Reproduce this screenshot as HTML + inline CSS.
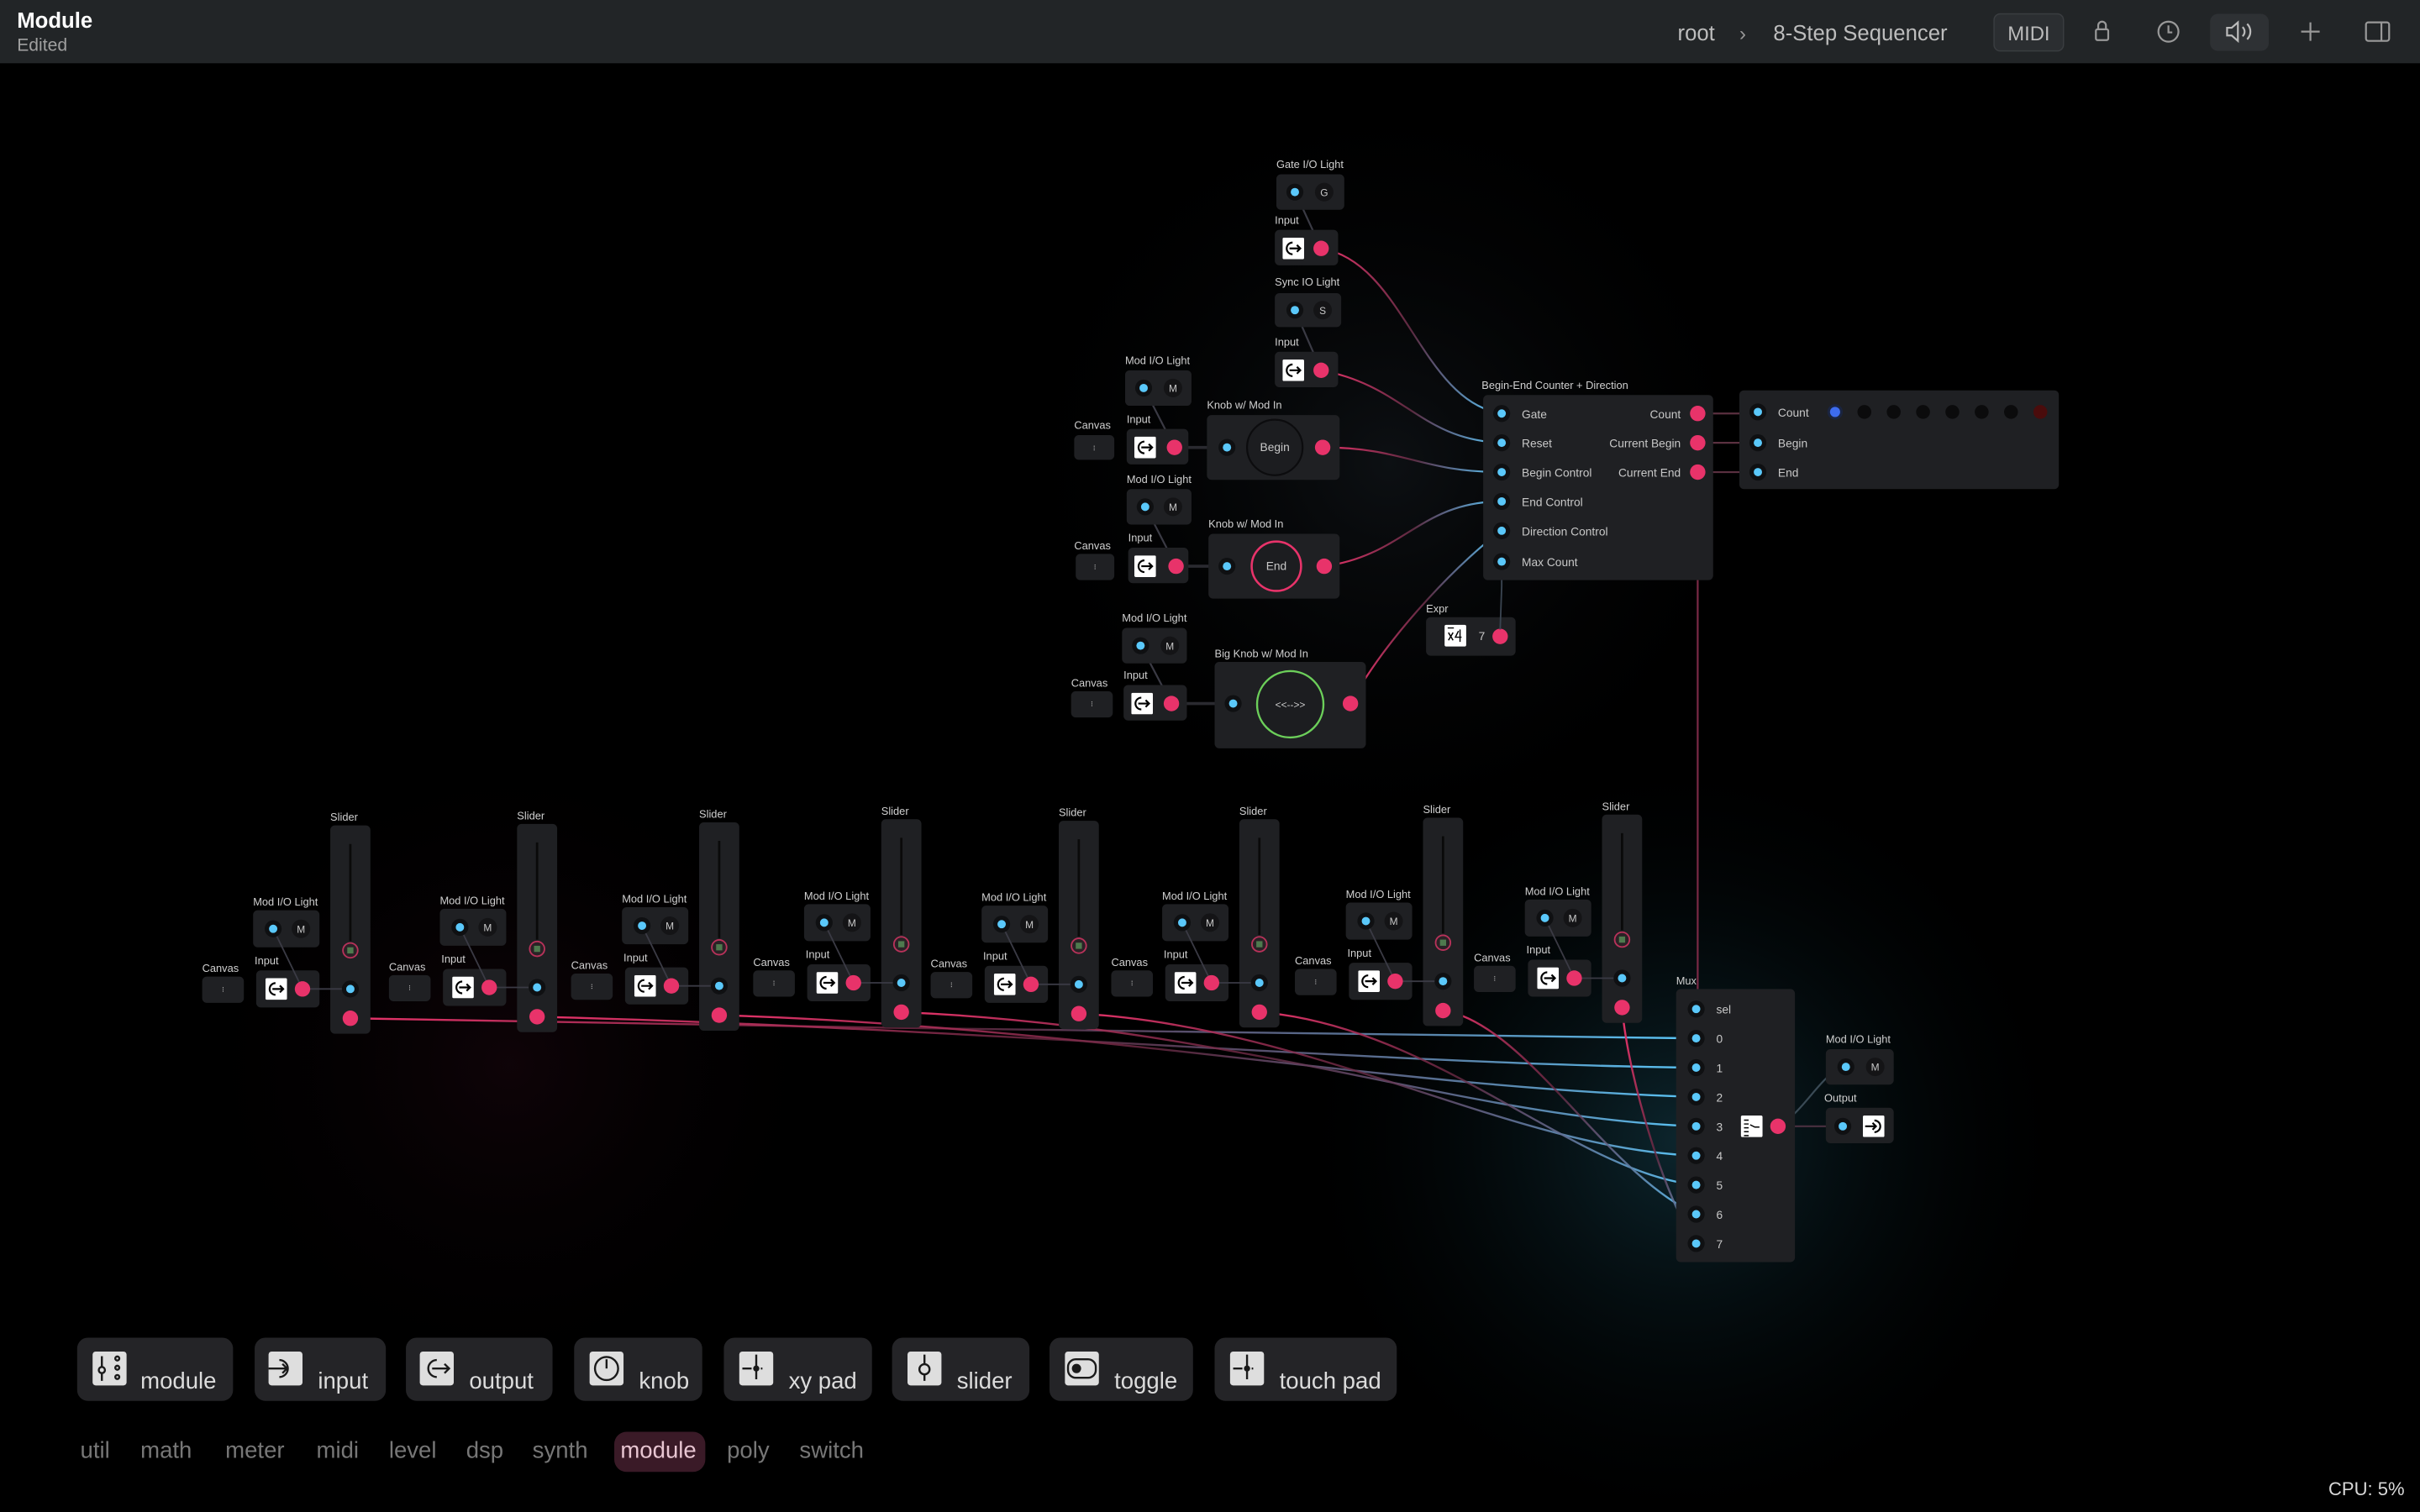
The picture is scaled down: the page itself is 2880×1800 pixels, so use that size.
<!DOCTYPE html>
<html><head><meta charset="utf-8"><style>
html,body{margin:0;padding:0;background:#000;width:2880px;height:1800px;overflow:hidden}
svg{display:block}
text{font-family:"Liberation Sans",sans-serif}
.nb{fill:#1f2023}
.lb{fill:#d0d0d0;font-size:7px}
.tx{fill:#c8c8c8;font-size:7.5px}
.pr{fill:#0f1012}
.pc{fill:#5ac8fa}
.po{fill:#e8336a}
.mc{fill:#141416}
.bt{font-size:15px;fill:#dcdcdc}
.ic{fill:#dedede}
.is{fill:none;stroke:#1a1a1a;stroke-width:1.3}
</style></head><body>
<svg width="2880" height="1800" viewBox="0 0 1568 980" xmlns="http://www.w3.org/2000/svg">
<defs>
<radialGradient id="glow" cx="1090" cy="740" r="260" gradientUnits="userSpaceOnUse">
<stop offset="0" stop-color="#0e2a33" stop-opacity=".9"/><stop offset="1" stop-color="#000" stop-opacity="0"/></radialGradient>
<radialGradient id="glow2" cx="330" cy="690" r="220" gradientUnits="userSpaceOnUse">
<stop offset="0" stop-color="#2a0a16" stop-opacity=".35"/><stop offset="1" stop-color="#000" stop-opacity="0"/></radialGradient>
<radialGradient id="glow3" cx="900" cy="300" r="260" gradientUnits="userSpaceOnUse">
<stop offset="0" stop-color="#101418" stop-opacity=".8"/><stop offset="1" stop-color="#000" stop-opacity="0"/></radialGradient>
<symbol id="oic" viewBox="0 0 14 14"><rect width="14" height="14" rx="1" fill="#fff"/><path d="M6.5 3.2A3.8 3.8 0 1 0 6.5 10.8" fill="none" stroke="#000" stroke-width="1.2"/><path d="M4.5 7H11.5M9.3 4.8L11.5 7L9.3 9.2" fill="none" stroke="#000" stroke-width="1.2"/></symbol>
<symbol id="iic" viewBox="0 0 14 14"><rect width="14" height="14" rx="1" fill="#fff"/><path d="M7.5 3.2A3.8 3.8 0 1 1 7.5 10.8" fill="none" stroke="#000" stroke-width="1.2"/><path d="M1.5 7H8.5M6.3 4.8L8.5 7L6.3 9.2" fill="none" stroke="#000" stroke-width="1.2"/></symbol>
<linearGradient id="rc" x1="0" y1="0" x2="1" y2="0"><stop offset="0" stop-color="#e8336a"/><stop offset=".5" stop-color="#5a2a40"/><stop offset="1" stop-color="#5ac8fa"/></linearGradient>
<linearGradient id="rc2" x1="0" y1="0" x2="1" y2="0"><stop offset="0" stop-color="#e8336a"/><stop offset=".45" stop-color="#6a2a44" stop-opacity=".8"/><stop offset="1" stop-color="#5ac8fa"/></linearGradient>
</defs>
<rect width="1568" height="980" fill="#000"/>
<rect width="1568" height="980" fill="url(#glow)"/>
<rect width="1568" height="980" fill="url(#glow2)"/>
<rect width="1568" height="980" fill="url(#glow3)"/>

<!-- top bar -->
<rect width="1568" height="41" fill="#222527"/>
<text x="11" y="18" style="font-size:14px;font-weight:bold;fill:#fff">Module</text>
<text x="11" y="33" style="font-size:11.5px;fill:#a0a0a0">Edited</text>
<text x="1087" y="26" style="font-size:14px;fill:#bdbdbd">root</text>
<text x="1127" y="26" style="font-size:13px;fill:#999">›</text>
<text x="1149" y="26" style="font-size:14px;fill:#bdbdbd">8-Step Sequencer</text>
<rect x="1292" y="9" width="45" height="24" rx="4" fill="#2b2e31" stroke="#3a3d40" stroke-width=".8"/>
<text x="1314.5" y="26" text-anchor="middle" style="font-size:13px;fill:#bbb">MIDI</text>
<g fill="none" stroke="#999" stroke-width="1.2">
<rect x="1358" y="19" width="8" height="7" rx="1"/><path d="M1359.5 19V16.5a2.5 2.5 0 0 1 5 0V19"/>
<circle cx="1405" cy="20.5" r="6.5"/><path d="M1405 16.5v4.5h2.5"/>
</g>
<rect x="1432" y="9" width="38" height="24" rx="5" fill="#2e3134"/>
<g fill="none" stroke="#bbb" stroke-width="1.2"><path d="M1443 18h3l4-3.5v12l-4-3.5h-3z"/><path d="M1453 17.5a4 4 0 0 1 0 6M1456 15.5a7 7 0 0 1 0 10"/>
<path d="M1497 14.5v12M1491 20.5h12" stroke="#999"/>
<rect x="1533" y="14.5" width="15" height="12" rx="1.5" stroke="#999"/><path d="M1543 14.5v12" stroke="#999"/></g>

<!-- wires top -->
<g fill="none" stroke-width="1.2">
<path d="M856 161C910 170 920 260 973 268" stroke="url(#rc)"/>
<path d="M856 240C910 250 920 285 973 287" stroke="url(#rc)"/>
<path d="M857 290C910 290 920 306 973 306" stroke="url(#rc)"/>
<path d="M858 367C910 360 920 325 973 325" stroke="url(#rc)"/>
<path d="M875 456C900 410 950 360 973 344" stroke="url(#rc)"/>
<path d="M1100 268H1139M1100 287H1139M1100 306H1139" stroke="#5a3040"/>
<path d="M1100 306V654H1099" stroke="#7a2a46"/>
<path d="M1152 730H1194" stroke="#4a3040"/>
<path d="M1152 730C1170 720 1180 695 1196 691" stroke="#3a4a55"/>
<path d="M839 124L856 161M839 201L856 240M741 251L761 290M742 328L762 367M739 418L759 456" stroke="#3a3a44"/>
<path d="M761 290H795M762 367H795M759 456H799" stroke="#2a2a30" stroke-width="2"/>
</g>

<!-- top column nodes -->
<text class="lb" x="827" y="109">Gate I/O Light</text>
<rect class="nb" x="827" y="113" width="44" height="23" rx="3"/>
<circle class="pr" cx="839" cy="124.5" r="5.5"/><circle class="pc" cx="839" cy="124.5" r="2.7"/>
<circle class="mc" cx="858" cy="124.5" r="6"/><text class="tx" x="858" y="127" text-anchor="middle" style="font-size:6.5px">G</text>
<text class="lb" x="826" y="145">Input</text>
<rect class="nb" x="826" y="149" width="41" height="23" rx="3"/>
<use href="#oic" x="831" y="154" width="14" height="14"/><circle class="po" cx="856" cy="161" r="5"/>
<text class="lb" x="826" y="185">Sync IO Light</text>
<rect class="nb" x="826" y="190" width="43" height="22" rx="3"/>
<circle class="pr" cx="839" cy="201" r="5.5"/><circle class="pc" cx="839" cy="201" r="2.7"/>
<circle class="mc" cx="857" cy="201" r="6"/><text class="tx" x="857" y="203.5" text-anchor="middle" style="font-size:6.5px">S</text>
<text class="lb" x="826" y="224">Input</text>
<rect class="nb" x="826" y="228" width="41" height="23" rx="3"/>
<use href="#oic" x="831" y="233" width="14" height="14"/><circle class="po" cx="856" cy="240" r="5"/>

<text class="lb" x="729" y="236">Mod I/O Light</text>
<rect class="nb" x="729" y="240" width="43" height="23" rx="3"/>
<circle class="pr" cx="741" cy="251.5" r="5.5"/><circle class="pc" cx="741" cy="251.5" r="2.7"/>
<circle class="mc" cx="760" cy="251.5" r="6"/><text class="tx" x="760" y="254" text-anchor="middle" style="font-size:6.5px">M</text>
<text class="lb" x="696" y="278">Canvas</text>
<rect class="nb" x="696" y="282" width="26" height="16" rx="3"/><text class="tx" x="709" y="292" text-anchor="middle" style="font-size:5px">⁝</text>
<text class="lb" x="730" y="274">Input</text>
<rect class="nb" x="730" y="278" width="40" height="23" rx="3"/>
<use href="#oic" x="735" y="283" width="14" height="14"/><circle class="po" cx="761" cy="290" r="5"/>
<text class="lb" x="782" y="265">Knob w/ Mod In</text>
<rect class="nb" x="782" y="269" width="86" height="42" rx="3"/>
<circle class="pr" cx="795" cy="290" r="5.5"/><circle class="pc" cx="795" cy="290" r="2.7"/>
<circle cx="826" cy="290" r="18" fill="#1c1d20" stroke="#0c0c0e" stroke-width="1.2"/>
<text class="tx" x="826" y="292.5" text-anchor="middle">Begin</text>
<circle class="po" cx="857" cy="290" r="5"/>

<text class="lb" x="730" y="313">Mod I/O Light</text>
<rect class="nb" x="730" y="317" width="42" height="23" rx="3"/>
<circle class="pr" cx="742" cy="328.5" r="5.5"/><circle class="pc" cx="742" cy="328.5" r="2.7"/>
<circle class="mc" cx="760" cy="328.5" r="6"/><text class="tx" x="760" y="331" text-anchor="middle" style="font-size:6.5px">M</text>
<text class="lb" x="696" y="356">Canvas</text>
<rect class="nb" x="697" y="359" width="25" height="17" rx="3"/><text class="tx" x="709.5" y="369" text-anchor="middle" style="font-size:5px">⁝</text>
<text class="lb" x="731" y="351">Input</text>
<rect class="nb" x="731" y="355" width="39" height="23" rx="3"/>
<use href="#oic" x="735" y="360" width="14" height="14"/><circle class="po" cx="762" cy="367" r="5"/>
<text class="lb" x="783" y="342">Knob w/ Mod In</text>
<rect class="nb" x="783" y="346" width="85" height="42" rx="3"/>
<circle class="pr" cx="795" cy="367" r="5.5"/><circle class="pc" cx="795" cy="367" r="2.7"/>
<circle cx="827" cy="367" r="16" fill="#1c1d20" stroke="#e8336a" stroke-width="1.4"/>
<text class="tx" x="827" y="369.5" text-anchor="middle">End</text>
<circle class="po" cx="858" cy="367" r="5"/>

<text class="lb" x="727" y="403">Mod I/O Light</text>
<rect class="nb" x="727" y="407" width="42" height="23" rx="3"/>
<circle class="pr" cx="739" cy="418.5" r="5.5"/><circle class="pc" cx="739" cy="418.5" r="2.7"/>
<circle class="mc" cx="758" cy="418.5" r="6"/><text class="tx" x="758" y="421" text-anchor="middle" style="font-size:6.5px">M</text>
<text class="lb" x="694" y="445">Canvas</text>
<rect class="nb" x="694" y="448" width="27" height="17" rx="3"/><text class="tx" x="707.5" y="458" text-anchor="middle" style="font-size:5px">⁝</text>
<text class="lb" x="728" y="440">Input</text>
<rect class="nb" x="728" y="444" width="41" height="23" rx="3"/>
<use href="#oic" x="733" y="449" width="14" height="14"/><circle class="po" cx="759" cy="456" r="5"/>
<text class="lb" x="787" y="426">Big Knob w/ Mod In</text>
<rect class="nb" x="787" y="429" width="98" height="56" rx="3"/>
<circle class="pr" cx="799" cy="456" r="5.5"/><circle class="pc" cx="799" cy="456" r="2.7"/>
<circle cx="836" cy="456.5" r="21.5" fill="#1c1d20" stroke="#6ccf5a" stroke-width="1.3"/>
<text class="tx" x="836" y="459" text-anchor="middle" style="font-size:6.5px">&lt;&lt;--&gt;&gt;</text>
<circle class="po" cx="875" cy="456" r="5"/>

<text class="lb" x="924" y="397">Expr</text>
<rect class="nb" x="924" y="400" width="58" height="25" rx="3"/>
<rect x="936" y="405" width="14" height="14" rx="1" fill="#fff"/><path d="M938 407h4M938.5 410l3 5M941.5 410l-3 5M945 409l-2 4h4M946 408v8" stroke="#000" stroke-width=".8" fill="none"/>
<text class="tx" x="958" y="415">7</text>
<circle class="po" cx="972" cy="412.5" r="5"/>
<path d="M973 364V380L972 408" stroke="#3a4450" fill="none" stroke-width="1"/>

<text class="lb" x="960" y="252">Begin-End Counter + Direction</text>
<rect class="nb" x="961" y="256" width="149" height="120" rx="3"/>
<g>
<circle class="pr" cx="973" cy="268" r="5.5"/><circle class="pc" cx="973" cy="268" r="2.7"/><text class="tx" x="986" y="271">Gate</text>
<circle class="pr" cx="973" cy="287" r="5.5"/><circle class="pc" cx="973" cy="287" r="2.7"/><text class="tx" x="986" y="290">Reset</text>
<circle class="pr" cx="973" cy="306" r="5.5"/><circle class="pc" cx="973" cy="306" r="2.7"/><text class="tx" x="986" y="309">Begin Control</text>
<circle class="pr" cx="973" cy="325" r="5.5"/><circle class="pc" cx="973" cy="325" r="2.7"/><text class="tx" x="986" y="328">End Control</text>
<circle class="pr" cx="973" cy="344" r="5.5"/><circle class="pc" cx="973" cy="344" r="2.7"/><text class="tx" x="986" y="347">Direction Control</text>
<circle class="pr" cx="973" cy="364" r="5.5"/><circle class="pc" cx="973" cy="364" r="2.7"/><text class="tx" x="986" y="367">Max Count</text>
<text class="tx" x="1089" y="271" text-anchor="end">Count</text><circle class="po" cx="1100" cy="268" r="5"/>
<text class="tx" x="1089" y="290" text-anchor="end">Current Begin</text><circle class="po" cx="1100" cy="287" r="5"/>
<text class="tx" x="1089" y="309" text-anchor="end">Current End</text><circle class="po" cx="1100" cy="306" r="5"/>
</g>
<rect class="nb" x="1127" y="253" width="207" height="64" rx="3"/>
<circle class="pr" cx="1139" cy="267" r="5.5"/><circle class="pc" cx="1139" cy="267" r="2.7"/><text class="tx" x="1152" y="270">Count</text>
<circle class="pr" cx="1139" cy="287" r="5.5"/><circle class="pc" cx="1139" cy="287" r="2.7"/><text class="tx" x="1152" y="290">Begin</text>
<circle class="pr" cx="1139" cy="306" r="5.5"/><circle class="pc" cx="1139" cy="306" r="2.7"/><text class="tx" x="1152" y="309">End</text>
<circle cx="1189" cy="267" r="5" fill="#1a2440"/><circle cx="1189" cy="267" r="3.3" fill="#3d6cf0"/>
<g fill="#0b0b0c"><circle cx="1208" cy="267" r="4.5"/><circle cx="1227" cy="267" r="4.5"/><circle cx="1246" cy="267" r="4.5"/><circle cx="1265" cy="267" r="4.5"/><circle cx="1284" cy="267" r="4.5"/><circle cx="1303" cy="267" r="4.5"/></g>
<circle cx="1322" cy="267" r="4.5" fill="#4a0c0c"/>

<!-- bottom wires -->
<g fill="none" stroke-width="1.3">
<path d="M227 660C500 665 900 672 1099 673" stroke="url(#rc2)"/>
<path d="M348 659C600 665 900 690 1099 692" stroke="url(#rc2)"/>
<path d="M466 658C700 665 900 705 1099 711" stroke="url(#rc2)"/>
<path d="M584 656C800 665 950 725 1099 730" stroke="url(#rc2)"/>
<path d="M699 657C850 665 980 745 1099 749" stroke="url(#rc2)"/>
<path d="M816 656C930 665 1020 760 1099 768" stroke="url(#rc2)"/>
<path d="M936 655C990 665 1040 760 1099 787" stroke="url(#rc2)"/>
<path d="M1051 653C1055 700 1080 780 1099 806" stroke="url(#rc2)"/>
</g>

<!-- slider groups -->
<g>
<text class="lb" x="131" y="630">Canvas</text>
<rect class="nb" x="131" y="633" width="27" height="17" rx="3"/><text class="tx" x="144.5" y="643" text-anchor="middle" style="font-size:5px">⁝</text>
<text class="lb" x="164" y="587">Mod I/O Light</text>
<rect class="nb" x="164" y="590" width="43" height="24" rx="3"/>
<text class="lb" x="165" y="625">Input</text>
<rect class="nb" x="166" y="629" width="41" height="24" rx="3"/>
<text class="lb" x="214" y="532">Slider</text>
<rect class="nb" x="214" y="535" width="26" height="135" rx="3"/>
<path d="M177 602L196 641M196 641H227" stroke="#3a3a44" fill="none" stroke-width="1"/>
<circle class="pr" cx="177" cy="602" r="5.5"/><circle class="pc" cx="177" cy="602" r="2.7"/>
<circle class="mc" cx="195" cy="602" r="6"/><text class="tx" x="195" y="604.5" text-anchor="middle" style="font-size:6.5px">M</text>
<use href="#oic" x="172" y="634" width="14" height="14"/>
<circle class="po" cx="196" cy="641" r="5"/>
<path d="M227 547V610" stroke="#0a0a0a" stroke-width="1.5"/>
<circle cx="227" cy="616" r="4.8" fill="#2a2226" stroke="#b8325a" stroke-width="1"/><rect x="225" y="614" width="4" height="4" fill="#4e7a4e"/>
<circle class="pr" cx="227" cy="641" r="5.5"/><circle class="pc" cx="227" cy="641" r="2.7"/>
<circle class="po" cx="227" cy="660" r="5"/>
</g>
<g transform="translate(121,-1)">
<text class="lb" x="131" y="630">Canvas</text>
<rect class="nb" x="131" y="633" width="27" height="17" rx="3"/><text class="tx" x="144.5" y="643" text-anchor="middle" style="font-size:5px">⁝</text>
<text class="lb" x="164" y="587">Mod I/O Light</text>
<rect class="nb" x="164" y="590" width="43" height="24" rx="3"/>
<text class="lb" x="165" y="625">Input</text>
<rect class="nb" x="166" y="629" width="41" height="24" rx="3"/>
<text class="lb" x="214" y="532">Slider</text>
<rect class="nb" x="214" y="535" width="26" height="135" rx="3"/>
<path d="M177 602L196 641M196 641H227" stroke="#3a3a44" fill="none" stroke-width="1"/>
<circle class="pr" cx="177" cy="602" r="5.5"/><circle class="pc" cx="177" cy="602" r="2.7"/>
<circle class="mc" cx="195" cy="602" r="6"/><text class="tx" x="195" y="604.5" text-anchor="middle" style="font-size:6.5px">M</text>
<use href="#oic" x="172" y="634" width="14" height="14"/>
<circle class="po" cx="196" cy="641" r="5"/>
<path d="M227 547V610" stroke="#0a0a0a" stroke-width="1.5"/>
<circle cx="227" cy="616" r="4.8" fill="#2a2226" stroke="#b8325a" stroke-width="1"/><rect x="225" y="614" width="4" height="4" fill="#4e7a4e"/>
<circle class="pr" cx="227" cy="641" r="5.5"/><circle class="pc" cx="227" cy="641" r="2.7"/>
<circle class="po" cx="227" cy="660" r="5"/>
</g>
<g transform="translate(239,-2)">
<text class="lb" x="131" y="630">Canvas</text>
<rect class="nb" x="131" y="633" width="27" height="17" rx="3"/><text class="tx" x="144.5" y="643" text-anchor="middle" style="font-size:5px">⁝</text>
<text class="lb" x="164" y="587">Mod I/O Light</text>
<rect class="nb" x="164" y="590" width="43" height="24" rx="3"/>
<text class="lb" x="165" y="625">Input</text>
<rect class="nb" x="166" y="629" width="41" height="24" rx="3"/>
<text class="lb" x="214" y="532">Slider</text>
<rect class="nb" x="214" y="535" width="26" height="135" rx="3"/>
<path d="M177 602L196 641M196 641H227" stroke="#3a3a44" fill="none" stroke-width="1"/>
<circle class="pr" cx="177" cy="602" r="5.5"/><circle class="pc" cx="177" cy="602" r="2.7"/>
<circle class="mc" cx="195" cy="602" r="6"/><text class="tx" x="195" y="604.5" text-anchor="middle" style="font-size:6.5px">M</text>
<use href="#oic" x="172" y="634" width="14" height="14"/>
<circle class="po" cx="196" cy="641" r="5"/>
<path d="M227 547V610" stroke="#0a0a0a" stroke-width="1.5"/>
<circle cx="227" cy="616" r="4.8" fill="#2a2226" stroke="#b8325a" stroke-width="1"/><rect x="225" y="614" width="4" height="4" fill="#4e7a4e"/>
<circle class="pr" cx="227" cy="641" r="5.5"/><circle class="pc" cx="227" cy="641" r="2.7"/>
<circle class="po" cx="227" cy="660" r="5"/>
</g>
<g transform="translate(357,-4)">
<text class="lb" x="131" y="630">Canvas</text>
<rect class="nb" x="131" y="633" width="27" height="17" rx="3"/><text class="tx" x="144.5" y="643" text-anchor="middle" style="font-size:5px">⁝</text>
<text class="lb" x="164" y="587">Mod I/O Light</text>
<rect class="nb" x="164" y="590" width="43" height="24" rx="3"/>
<text class="lb" x="165" y="625">Input</text>
<rect class="nb" x="166" y="629" width="41" height="24" rx="3"/>
<text class="lb" x="214" y="532">Slider</text>
<rect class="nb" x="214" y="535" width="26" height="135" rx="3"/>
<path d="M177 602L196 641M196 641H227" stroke="#3a3a44" fill="none" stroke-width="1"/>
<circle class="pr" cx="177" cy="602" r="5.5"/><circle class="pc" cx="177" cy="602" r="2.7"/>
<circle class="mc" cx="195" cy="602" r="6"/><text class="tx" x="195" y="604.5" text-anchor="middle" style="font-size:6.5px">M</text>
<use href="#oic" x="172" y="634" width="14" height="14"/>
<circle class="po" cx="196" cy="641" r="5"/>
<path d="M227 547V610" stroke="#0a0a0a" stroke-width="1.5"/>
<circle cx="227" cy="616" r="4.8" fill="#2a2226" stroke="#b8325a" stroke-width="1"/><rect x="225" y="614" width="4" height="4" fill="#4e7a4e"/>
<circle class="pr" cx="227" cy="641" r="5.5"/><circle class="pc" cx="227" cy="641" r="2.7"/>
<circle class="po" cx="227" cy="660" r="5"/>
</g>
<g transform="translate(472,-3)">
<text class="lb" x="131" y="630">Canvas</text>
<rect class="nb" x="131" y="633" width="27" height="17" rx="3"/><text class="tx" x="144.5" y="643" text-anchor="middle" style="font-size:5px">⁝</text>
<text class="lb" x="164" y="587">Mod I/O Light</text>
<rect class="nb" x="164" y="590" width="43" height="24" rx="3"/>
<text class="lb" x="165" y="625">Input</text>
<rect class="nb" x="166" y="629" width="41" height="24" rx="3"/>
<text class="lb" x="214" y="532">Slider</text>
<rect class="nb" x="214" y="535" width="26" height="135" rx="3"/>
<path d="M177 602L196 641M196 641H227" stroke="#3a3a44" fill="none" stroke-width="1"/>
<circle class="pr" cx="177" cy="602" r="5.5"/><circle class="pc" cx="177" cy="602" r="2.7"/>
<circle class="mc" cx="195" cy="602" r="6"/><text class="tx" x="195" y="604.5" text-anchor="middle" style="font-size:6.5px">M</text>
<use href="#oic" x="172" y="634" width="14" height="14"/>
<circle class="po" cx="196" cy="641" r="5"/>
<path d="M227 547V610" stroke="#0a0a0a" stroke-width="1.5"/>
<circle cx="227" cy="616" r="4.8" fill="#2a2226" stroke="#b8325a" stroke-width="1"/><rect x="225" y="614" width="4" height="4" fill="#4e7a4e"/>
<circle class="pr" cx="227" cy="641" r="5.5"/><circle class="pc" cx="227" cy="641" r="2.7"/>
<circle class="po" cx="227" cy="660" r="5"/>
</g>
<g transform="translate(589,-4)">
<text class="lb" x="131" y="630">Canvas</text>
<rect class="nb" x="131" y="633" width="27" height="17" rx="3"/><text class="tx" x="144.5" y="643" text-anchor="middle" style="font-size:5px">⁝</text>
<text class="lb" x="164" y="587">Mod I/O Light</text>
<rect class="nb" x="164" y="590" width="43" height="24" rx="3"/>
<text class="lb" x="165" y="625">Input</text>
<rect class="nb" x="166" y="629" width="41" height="24" rx="3"/>
<text class="lb" x="214" y="532">Slider</text>
<rect class="nb" x="214" y="535" width="26" height="135" rx="3"/>
<path d="M177 602L196 641M196 641H227" stroke="#3a3a44" fill="none" stroke-width="1"/>
<circle class="pr" cx="177" cy="602" r="5.5"/><circle class="pc" cx="177" cy="602" r="2.7"/>
<circle class="mc" cx="195" cy="602" r="6"/><text class="tx" x="195" y="604.5" text-anchor="middle" style="font-size:6.5px">M</text>
<use href="#oic" x="172" y="634" width="14" height="14"/>
<circle class="po" cx="196" cy="641" r="5"/>
<path d="M227 547V610" stroke="#0a0a0a" stroke-width="1.5"/>
<circle cx="227" cy="616" r="4.8" fill="#2a2226" stroke="#b8325a" stroke-width="1"/><rect x="225" y="614" width="4" height="4" fill="#4e7a4e"/>
<circle class="pr" cx="227" cy="641" r="5.5"/><circle class="pc" cx="227" cy="641" r="2.7"/>
<circle class="po" cx="227" cy="660" r="5"/>
</g>
<g transform="translate(708,-5)">
<text class="lb" x="131" y="630">Canvas</text>
<rect class="nb" x="131" y="633" width="27" height="17" rx="3"/><text class="tx" x="144.5" y="643" text-anchor="middle" style="font-size:5px">⁝</text>
<text class="lb" x="164" y="587">Mod I/O Light</text>
<rect class="nb" x="164" y="590" width="43" height="24" rx="3"/>
<text class="lb" x="165" y="625">Input</text>
<rect class="nb" x="166" y="629" width="41" height="24" rx="3"/>
<text class="lb" x="214" y="532">Slider</text>
<rect class="nb" x="214" y="535" width="26" height="135" rx="3"/>
<path d="M177 602L196 641M196 641H227" stroke="#3a3a44" fill="none" stroke-width="1"/>
<circle class="pr" cx="177" cy="602" r="5.5"/><circle class="pc" cx="177" cy="602" r="2.7"/>
<circle class="mc" cx="195" cy="602" r="6"/><text class="tx" x="195" y="604.5" text-anchor="middle" style="font-size:6.5px">M</text>
<use href="#oic" x="172" y="634" width="14" height="14"/>
<circle class="po" cx="196" cy="641" r="5"/>
<path d="M227 547V610" stroke="#0a0a0a" stroke-width="1.5"/>
<circle cx="227" cy="616" r="4.8" fill="#2a2226" stroke="#b8325a" stroke-width="1"/><rect x="225" y="614" width="4" height="4" fill="#4e7a4e"/>
<circle class="pr" cx="227" cy="641" r="5.5"/><circle class="pc" cx="227" cy="641" r="2.7"/>
<circle class="po" cx="227" cy="660" r="5"/>
</g>
<g transform="translate(824,-7)">
<text class="lb" x="131" y="630">Canvas</text>
<rect class="nb" x="131" y="633" width="27" height="17" rx="3"/><text class="tx" x="144.5" y="643" text-anchor="middle" style="font-size:5px">⁝</text>
<text class="lb" x="164" y="587">Mod I/O Light</text>
<rect class="nb" x="164" y="590" width="43" height="24" rx="3"/>
<text class="lb" x="165" y="625">Input</text>
<rect class="nb" x="166" y="629" width="41" height="24" rx="3"/>
<text class="lb" x="214" y="532">Slider</text>
<rect class="nb" x="214" y="535" width="26" height="135" rx="3"/>
<path d="M177 602L196 641M196 641H227" stroke="#3a3a44" fill="none" stroke-width="1"/>
<circle class="pr" cx="177" cy="602" r="5.5"/><circle class="pc" cx="177" cy="602" r="2.7"/>
<circle class="mc" cx="195" cy="602" r="6"/><text class="tx" x="195" y="604.5" text-anchor="middle" style="font-size:6.5px">M</text>
<use href="#oic" x="172" y="634" width="14" height="14"/>
<circle class="po" cx="196" cy="641" r="5"/>
<path d="M227 547V610" stroke="#0a0a0a" stroke-width="1.5"/>
<circle cx="227" cy="616" r="4.8" fill="#2a2226" stroke="#b8325a" stroke-width="1"/><rect x="225" y="614" width="4" height="4" fill="#4e7a4e"/>
<circle class="pr" cx="227" cy="641" r="5.5"/><circle class="pc" cx="227" cy="641" r="2.7"/>
<circle class="po" cx="227" cy="660" r="5"/>
</g>

<!-- mux -->
<text class="lb" x="1086" y="638">Mux</text>
<rect class="nb" x="1086" y="641" width="77" height="177" rx="3"/>
<g>
<circle class="pr" cx="1099" cy="654" r="5.5"/><circle class="pc" cx="1099" cy="654" r="2.7"/><text class="tx" x="1112" y="657">sel</text>
<circle class="pr" cx="1099" cy="673" r="5.5"/><circle class="pc" cx="1099" cy="673" r="2.7"/><text class="tx" x="1112" y="676">0</text>
<circle class="pr" cx="1099" cy="692" r="5.5"/><circle class="pc" cx="1099" cy="692" r="2.7"/><text class="tx" x="1112" y="695">1</text>
<circle class="pr" cx="1099" cy="711" r="5.5"/><circle class="pc" cx="1099" cy="711" r="2.7"/><text class="tx" x="1112" y="714">2</text>
<circle class="pr" cx="1099" cy="730" r="5.5"/><circle class="pc" cx="1099" cy="730" r="2.7"/><text class="tx" x="1112" y="733">3</text>
<circle class="pr" cx="1099" cy="749" r="5.5"/><circle class="pc" cx="1099" cy="749" r="2.7"/><text class="tx" x="1112" y="752">4</text>
<circle class="pr" cx="1099" cy="768" r="5.5"/><circle class="pc" cx="1099" cy="768" r="2.7"/><text class="tx" x="1112" y="771">5</text>
<circle class="pr" cx="1099" cy="787" r="5.5"/><circle class="pc" cx="1099" cy="787" r="2.7"/><text class="tx" x="1112" y="790">6</text>
<circle class="pr" cx="1099" cy="806" r="5.5"/><circle class="pc" cx="1099" cy="806" r="2.7"/><text class="tx" x="1112" y="809">7</text>
</g>
<rect x="1128" y="723" width="14" height="14" rx="1" fill="#fff"/>
<path d="M1130 726h3M1130 728.5h3M1130 731h3M1130 733.5h3M1130 736h3M1134 729l3 1.5h3" stroke="#000" stroke-width=".8" fill="none"/>
<circle class="po" cx="1152" cy="730" r="5"/>
<text class="lb" x="1183" y="676">Mod I/O Light</text>
<rect class="nb" x="1183" y="680" width="44" height="23" rx="3"/>
<circle class="pr" cx="1196" cy="691.5" r="5.5"/><circle class="pc" cx="1196" cy="691.5" r="2.7"/>
<circle class="mc" cx="1215" cy="691.5" r="6"/><text class="tx" x="1215" y="694" text-anchor="middle" style="font-size:6.5px">M</text>
<text class="lb" x="1182" y="714">Output</text>
<rect class="nb" x="1183" y="718" width="44" height="23" rx="3"/>
<circle class="pr" cx="1194" cy="730" r="5.5"/><circle class="pc" cx="1194" cy="730" r="2.7"/>
<use href="#iic" x="1207" y="723" width="14" height="14"/>

<!-- toolbar -->
<g>
<rect x="50" y="867" width="101" height="41" rx="7" fill="#242427"/>
<rect class="ic" x="60" y="876" width="22" height="22" rx="2"/>
<path class="is" d="M66 879v7M66 890v5"/><circle class="is" cx="66" cy="888" r="2"/><circle class="is" cx="76" cy="880.5" r="1.3"/><circle class="is" cx="76" cy="886.5" r="1.3"/><circle class="is" cx="76" cy="892.5" r="1.3"/>
<text class="bt" x="91" y="900">module</text>

<rect x="165" y="867" width="85" height="41" rx="7" fill="#242427"/>
<rect class="ic" x="174" y="876" width="22" height="22" rx="2"/>
<path class="is" d="M181 881.5A5.5 5.5 0 1 1 181 892.5M174 887H186M183 884L186 887L183 890"/>
<text class="bt" x="206" y="900">input</text>

<rect x="263" y="867" width="95" height="41" rx="7" fill="#242427"/>
<rect class="ic" x="272" y="876" width="22" height="22" rx="2"/>
<path class="is" d="M283 881.5A5.5 5.5 0 1 0 283 892.5M280 887H291M288 884L291 887L288 890"/>
<text class="bt" x="304" y="900">output</text>

<rect x="372" y="867" width="83" height="41" rx="7" fill="#242427"/>
<rect class="ic" x="382" y="876" width="22" height="22" rx="2"/>
<circle class="is" cx="393" cy="887" r="7.5"/><path class="is" d="M393 881v6"/>
<text class="bt" x="414" y="900">knob</text>

<rect x="469" y="867" width="96" height="41" rx="7" fill="#242427"/>
<rect class="ic" x="479" y="876" width="22" height="22" rx="2"/>
<path class="is" d="M490 878v16M481 887h6M493 887h1"/><circle cx="490" cy="887" r="2" fill="#1a1a1a"/>
<text class="bt" x="511" y="900">xy pad</text>

<rect x="578" y="867" width="89" height="41" rx="7" fill="#242427"/>
<rect class="ic" x="588" y="876" width="22" height="22" rx="2"/>
<path class="is" d="M599 878v6M599 891v4"/><circle class="is" cx="599" cy="887.5" r="3.3"/>
<text class="bt" x="620" y="900">slider</text>

<rect x="680" y="867" width="93" height="41" rx="7" fill="#242427"/>
<rect class="ic" x="690" y="876" width="22" height="22" rx="2"/>
<rect class="is" x="692" y="881" width="18" height="12" rx="5"/><circle cx="697.5" cy="887" r="3" fill="#1a1a1a"/>
<text class="bt" x="722" y="900">toggle</text>

<rect x="787" y="867" width="118" height="41" rx="7" fill="#242427"/>
<rect class="ic" x="797" y="876" width="22" height="22" rx="2"/>
<path class="is" d="M808 878v16M799 887h6M811 887h1"/><circle cx="808" cy="887" r="2" fill="#1a1a1a"/>
<text class="bt" x="829" y="900">touch pad</text>
</g>
<g style="font-size:15px;fill:#777">
<text x="52" y="945">util</text>
<text x="91" y="945">math</text>
<text x="146" y="945">meter</text>
<text x="205" y="945">midi</text>
<text x="252" y="945">level</text>
<text x="302" y="945">dsp</text>
<text x="345" y="945">synth</text>
<rect x="398" y="928" width="59" height="26" rx="8" fill="#3a1a27"/>
<text x="402" y="945" style="fill:#e8c6d2">module</text>
<text x="471" y="945">poly</text>
<text x="518" y="945">switch</text>
</g>
<text x="1558" y="969" text-anchor="end" style="font-size:12px;fill:#d8d8d8">CPU: 5%</text>
</svg>
</body></html>
